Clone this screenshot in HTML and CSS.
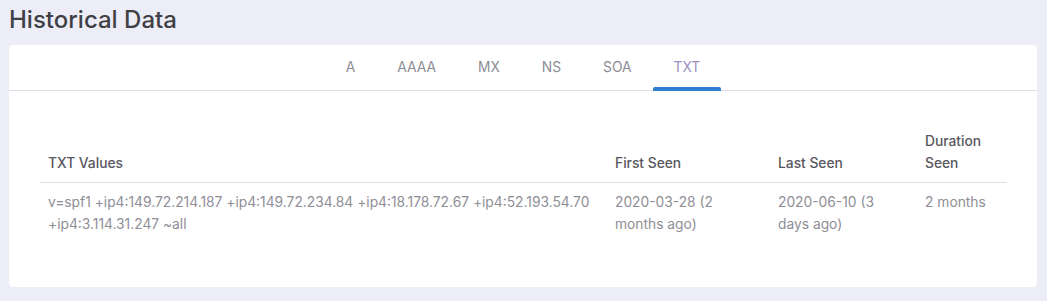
FILE: index.html
```html
<!DOCTYPE html>
<html lang="en">
<head>
  <meta charset="UTF-8">
  <title>Historical Data</title>
  <link rel="stylesheet" href="styles.css">
</head>
<body>
  <h1 class="title">Historical Data</h1>
  <div class="card">
    <nav class="tabs">
      <a class="tab">A</a>
      <a class="tab">AAAA</a>
      <a class="tab">MX</a>
      <a class="tab">NS</a>
      <a class="tab">SOA</a>
      <a class="tab active">TXT</a>
    </nav>
    <div class="card-body">
      <table class="records">
        <thead>
          <tr>
            <th class="col-value">TXT Values</th>
            <th class="col-first">First Seen</th>
            <th class="col-last">Last Seen</th>
            <th class="col-duration">Duration Seen</th>
          </tr>
        </thead>
        <tbody>
          <tr>
            <td>v=spf1 +ip4:149.72.214.187 +ip4:149.72.234.84 +ip4:18.178.72.67 +ip4:52.193.54.70 +ip4:3.114.31.247 ~all</td>
            <td>2020-03-28 (2 months ago)</td>
            <td>2020-06-10 (3 days ago)</td>
            <td>2 months</td>
          </tr>
        </tbody>
      </table>
    </div>
  </div>
</body>
</html>
```

FILE: styles.css
```css
* {
  margin: 0;
  padding: 0;
  box-sizing: border-box;
}

body {
  font-family: 'Inter', 'Noto Sans', sans-serif;
  background-color: #ecedf6;
  padding: 4px 10px 0 9px;
  color: #555;
}

.title {
  font-size: 24px;
  font-weight: 500;
  color: #3f3f46;
  line-height: 32px;
  margin-bottom: 9px;
}

.card {
  background-color: #fff;
  border-radius: 4px;
  width: 1028px;
  height: 242px;
}

.tabs {
  display: flex;
  justify-content: center;
  border-bottom: 1px solid #dedfe4;
  height: 46px;
}

.tab {
  padding: 0 21px;
  font-size: 13.8px;
  line-height: 45px;
  color: #8c8c96;
  position: relative;
}

.tab.active {
  color: #9a8fc4;
}

.tab.active::after {
  content: '';
  position: absolute;
  left: 0;
  right: 0;
  bottom: -1px;
  height: 4px;
  background-color: #2f7fd3;
  border-radius: 2px 2px 0 0;
}

.card-body {
  padding: 30px 30px 0 31px;
}

.records {
  border-collapse: collapse;
  table-layout: fixed;
  width: 967px;
  font-size: 13.8px;
  line-height: 22px;
}

.records th {
  text-align: left;
  font-weight: 500;
  color: #575760;
  vertical-align: bottom;
  padding: 9px 8px 8px;
  border-bottom: 1px solid #dfe0e6;
}

.records td {
  vertical-align: top;
  color: #8e8e96;
  padding: 8px 14px 8px 8px;
}

.col-value { width: 567px; }
.col-first { width: 163px; }
.col-last { width: 147px; }
.col-duration { width: 90px; }
```
